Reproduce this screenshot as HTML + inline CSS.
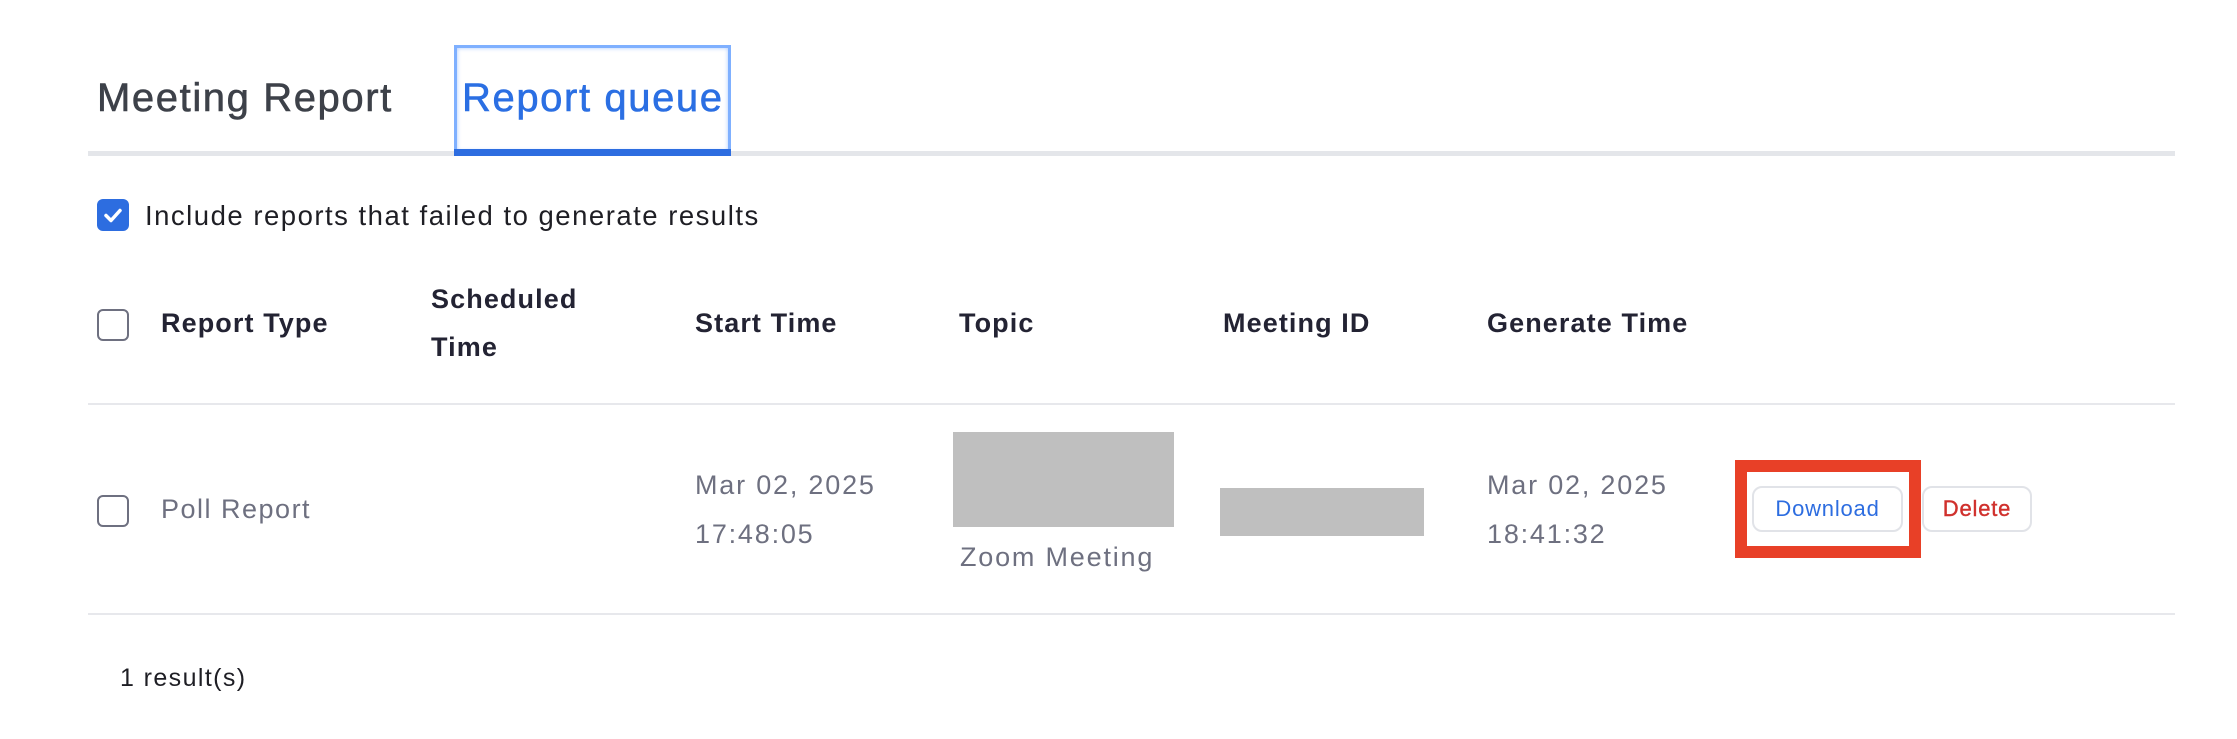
<!DOCTYPE html>
<html><head><meta charset="utf-8"><style>
body{margin:0;width:2237px;height:739px;background:#fff;font-family:"Liberation Sans",sans-serif;position:relative;overflow:hidden}
.a{position:absolute;white-space:nowrap}
.h{font-size:27px;color:#232333;font-weight:bold;letter-spacing:1.1px}
.g{font-size:27px;color:#6e7080;letter-spacing:1.8px}
.cb{position:absolute;width:28px;height:28px;border:2px solid #6e7080;border-radius:6px;box-sizing:content-box}
.t{font-size:40px;letter-spacing:1.6px;-webkit-text-stroke:0.6px currentColor}
</style></head><body>
<div class="a t" style="left:97px;top:76px;color:#3d4149">Meeting Report</div>
<div class="a" style="left:454px;top:45px;width:277px;height:109px;box-sizing:border-box;border:3px solid #7fb0ff;box-shadow:inset 0 0 4px #a8c8ff"></div>
<div class="a t" style="left:462px;top:76px;color:#2b6fe3">Report queue</div>
<div class="a" style="left:88px;top:151px;width:2087px;height:5px;background:#e4e6ea"></div>
<div class="a" style="left:454px;top:149px;width:277px;height:7px;background:#2d6de0"></div>

<div class="a" style="left:97px;top:199px;width:32px;height:32px;border-radius:6px;background:#2d6de0"></div>
<svg class="a" style="left:97px;top:199px" width="32" height="32"><path d="M9 16.5l5 5 9-10" stroke="#fff" stroke-width="3.5" fill="none" stroke-linecap="round" stroke-linejoin="round"/></svg>
<div class="a" style="left:145px;top:200px;font-size:27.5px;color:#1e1e24;letter-spacing:1.5px">Include reports that failed to generate results</div>

<div class="cb" style="left:97px;top:309px"></div>
<div class="a h" style="left:161px;top:308px">Report Type</div>
<div class="a h" style="left:431px;top:284px">Scheduled</div>
<div class="a h" style="left:431px;top:332px">Time</div>
<div class="a h" style="left:695px;top:308px">Start Time</div>
<div class="a h" style="left:959px;top:308px">Topic</div>
<div class="a h" style="left:1223px;top:308px">Meeting ID</div>
<div class="a h" style="left:1487px;top:308px">Generate Time</div>
<div class="a" style="left:88px;top:403px;width:2087px;height:2px;background:#e7e8ec"></div>

<div class="cb" style="left:97px;top:495px"></div>
<div class="a g" style="left:161px;top:494px;letter-spacing:1.5px">Poll Report</div>
<div class="a g" style="left:695px;top:470px">Mar 02, 2025</div>
<div class="a g" style="left:695px;top:519px">17:48:05</div>
<div class="a" style="left:953px;top:432px;width:221px;height:95px;background:#bfbfbf"></div>
<div class="a g" style="left:960px;top:542px">Zoom Meeting</div>
<div class="a" style="left:1220px;top:488px;width:204px;height:48px;background:#bfbfbf"></div>
<div class="a g" style="left:1487px;top:470px">Mar 02, 2025</div>
<div class="a g" style="left:1487px;top:519px">18:41:32</div>

<div class="a" style="left:1735px;top:460px;width:186px;height:98px;box-sizing:border-box;border:12px solid #e84027"></div>
<div class="a" style="left:1752px;top:486px;width:151px;height:46px;box-sizing:border-box;border:2px solid #e1e3e8;border-radius:10px;color:#2d6de0;font-size:22px;text-align:center;line-height:42px;letter-spacing:0.8px">Download</div>
<div class="a" style="left:1922px;top:486px;width:110px;height:46px;box-sizing:border-box;border:2px solid #e1e3e8;border-radius:10px;color:#d0312d;font-size:22px;text-align:center;line-height:42px;letter-spacing:0.8px;-webkit-text-stroke:0.4px currentColor">Delete</div>

<div class="a" style="left:88px;top:613px;width:2087px;height:2px;background:#e7e8ec"></div>
<div class="a" style="left:120px;top:664px;font-size:25px;color:#1e1e24;letter-spacing:1.4px">1 result(s)</div>
</body></html>
